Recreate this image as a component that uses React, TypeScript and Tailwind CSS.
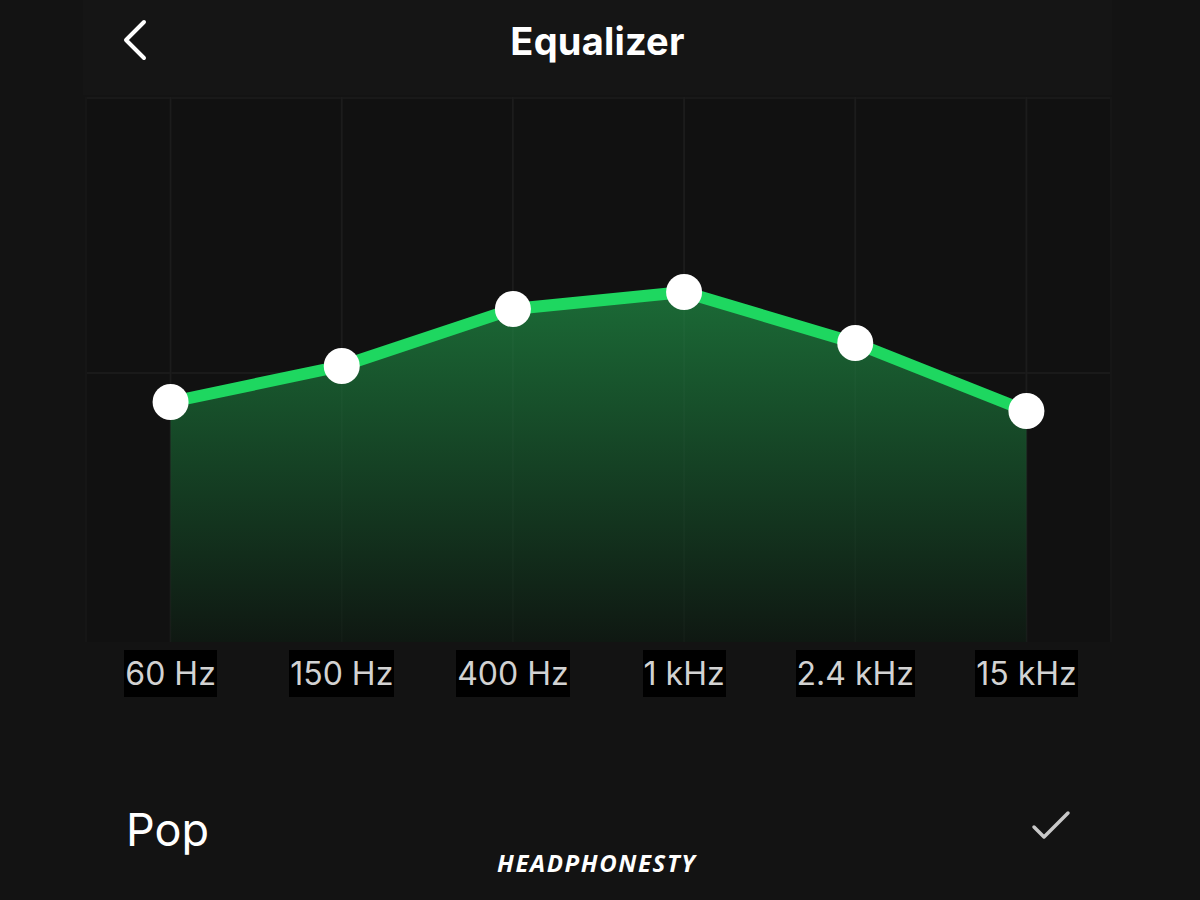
import React from "react";

const bands = ["60 Hz", "150 Hz", "400 Hz", "1 kHz", "2.4 kHz", "15 kHz"];
// gain curve, in chart pixels (y from top of the plot)
const levels = [305, 269, 212, 195, 246, 314];

const W = 1027;
const H = 545;
const colW = W / 6;

function Chart() {
  const pts = levels.map((y, i) => [colW / 2 + i * colW, y] as const);
  const line = pts.map((p) => p.join(",")).join(" ");
  const area = `${pts[0][0]},${H} ${line} ${pts[5][0]},${H}`;
  return (
    <svg width={W} height={H} viewBox={`0 0 ${W} ${H}`} className="block">
      <defs>
        <linearGradient id="eqFill" x1="0" y1="195" x2="0" y2={H} gradientUnits="userSpaceOnUse">
          <stop offset="0" stopColor="#1b6a36" />
          <stop offset="1" stopColor="#0f1812" />
        </linearGradient>
      </defs>
      <rect x="0" y="0" width={W} height={H} fill="#111111" />
      {/* grid */}
      <line x1="0" y1="1" x2={W} y2="1" stroke="#191919" strokeWidth="2" />
      <line x1="0" y1="276" x2={W} y2="276" stroke="#1a1a1a" strokeWidth="2" />
      <line x1="1" y1="0" x2="1" y2={H} stroke="#161616" strokeWidth="2" />
      <line x1={W - 1} y1="0" x2={W - 1} y2={H} stroke="#161616" strokeWidth="2" />
      {pts.map(([x], i) => (
        <line key={i} x1={x} y1="0" x2={x} y2={H} stroke="#181818" strokeWidth="2" />
      ))}
      <polygon points={area} fill="url(#eqFill)" />
      {pts.map(([x], i) => (
        <line key={`g${i}`} x1={x} y1="0" x2={x} y2={H} stroke="#ffffff" strokeOpacity="0.02" strokeWidth="2" />
      ))}
      <polyline points={line} fill="none" stroke="#1ed760" strokeWidth="12" strokeLinejoin="round" />
      {pts.map(([x, y], i) => (
        <circle key={`c${i}`} cx={x} cy={y} r="18" fill="#ffffff" />
      ))}
    </svg>
  );
}

export default function App() {
  return (
    <div className="relative w-[1200px] h-[900px] bg-[#131313] overflow-hidden" style={{ fontFamily: "Inter, 'Noto Sans', sans-serif" }}>
      {/* header */}
      <div className="mx-[83px] w-[1029px] h-[95px] bg-[#151515] relative flex items-center justify-center">
        <svg width="30" height="46" viewBox="0 0 30 46" className="absolute left-[37px] top-[17px]">
          <polyline points="24,5 6,23 24,41" fill="none" stroke="#ffffff" strokeWidth="4" strokeLinecap="round" strokeLinejoin="round" />
        </svg>
        <span className="text-white font-bold text-[38px] leading-none tracking-[0.2px] -mt-[14px] ml-[0px]">Equalizer</span>
      </div>
      <div className="h-[2px]" />
      {/* chart */}
      <div className="ml-[85px] w-[1027px]">
        <Chart />
        <div className="grid grid-cols-6 mt-[8px]">
          {bands.map((b) => (
            <div key={b} className="flex justify-center">
              <span className="bg-black text-[#d2d2d2] text-[32px] leading-[47px] px-[1px]">{b}</span>
            </div>
          ))}
        </div>
      </div>
      {/* preset row */}
      <div className="flex items-center justify-between ml-[126px] mr-[128px] mt-[110px]">
        <span className="text-white text-[45px] leading-none font-normal">Pop</span>
        <svg width="42" height="34" viewBox="0 0 42 34" className="mt-[-8px]">
          <polyline points="4,18 14,28 38,4" fill="none" stroke="#c8c8c8" strokeWidth="3.5" strokeLinecap="round" strokeLinejoin="round" />
        </svg>
      </div>
      <div
        className="absolute left-[497px] top-[848px] text-white font-bold italic text-[24px] leading-[30px] tracking-[1.6px]"
        style={{ fontFamily: "'Open Sans', sans-serif" }}
      >
        HEADPHONESTY
      </div>
    </div>
  );
}
